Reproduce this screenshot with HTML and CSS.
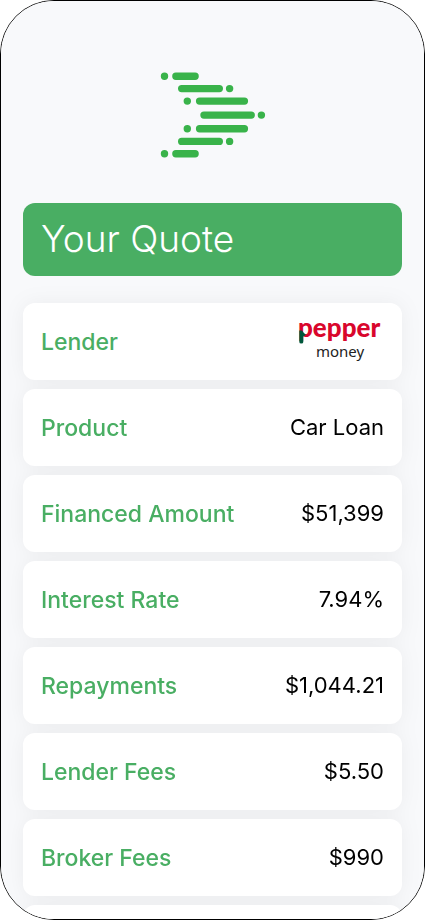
FILE: index.html
```html
<!DOCTYPE html>
<html lang="en">
<head>
<meta charset="utf-8">
<meta name="viewport" content="width=device-width, initial-scale=1">
<title>Your Quote</title>
<link rel="stylesheet" href="styles.css">
</head>
<body>
<main class="phone">
  <header class="brand">
    <svg class="brand-mark" viewBox="0 0 106 88" width="106" height="88" aria-hidden="true">
      <g stroke-width="7.4" stroke-linecap="round">
        <path d="M4.5 5.2h.01M15.9 5.2H35.1"/>
        <path d="M21.7 17.6H59.3M69.6 17.6h.01"/>
        <path d="M27.3 30.1h.01M39.6 30.1H84.4"/>
        <path d="M44 44.1H91.2M101.4 44.1h.01"/>
        <path d="M27.3 57.8h.01M39.6 57.8H84.4"/>
        <path d="M21.7 70.4H59.3M69.6 70.4h.01"/>
        <path d="M4.5 82.8h.01M15.9 82.8H35.1"/>
      </g>
    </svg>
  </header>
  <h1 class="title">Your Quote</h1>
  <dl class="quote">
    <div class="card">
      <dt>Lender</dt>
      <dd>
        <svg class="lender-logo" viewBox="0 0 86 46" width="86" height="46" role="img" aria-label="pepper money">
          <text class="pepper" x="0" y="19">pepper</text>
          <path class="leaf" d="M1.300 12.500H4Q5.500 15 8 16.800L5.300 18.500V24Q5.300 25.500 3.300 25.500Q1.300 25.500 1.300 24Z"/>
          <text class="money" x="18" y="39">money</text>
        </svg>
      </dd>
    </div>
    <div class="card"><dt>Product</dt><dd>Car Loan</dd></div>
    <div class="card"><dt>Financed Amount</dt><dd>$51,399</dd></div>
    <div class="card"><dt>Interest Rate</dt><dd>7.94%</dd></div>
    <div class="card"><dt>Repayments</dt><dd>$1,044.21</dd></div>
    <div class="card"><dt>Lender Fees</dt><dd>$5.50</dd></div>
    <div class="card"><dt>Broker Fees</dt><dd>$990</dd></div>
    <div class="card"></div>
  </dl>
</main>
</body>
</html>
```
FILE: styles.css
```css
* {
  box-sizing: border-box;
}

body {
  margin: 0;
  background: #fff;
  font-family: Inter, "Liberation Sans", sans-serif;
}

.phone {
  height: 100vh;
  padding: 70px 22px 0;
  overflow-y: auto;
  scrollbar-width: none;
  border: 1px solid #000;
  border-radius: 54px;
  background: #f8f9fb;
}

.brand {
  display: flex;
  justify-content: center;
  margin-bottom: 44px;
}

.brand-mark {
  fill: none;
  stroke: #39b34a;
}

.title {
  margin: 0 0 27px;
  padding: 14px 18px 15px;
  border-radius: 12px;
  background: #49ae63;
  color: #fff;
  font-size: 37px;
  font-weight: 300;
  line-height: 44px;
}

.quote {
  display: flex;
  flex-direction: column;
  gap: 9px;
  margin: 0;
  filter: drop-shadow(0 0 10px rgba(0, 0, 0, 0.05));
}

.card {
  display: flex;
  align-items: center;
  justify-content: space-between;
  min-height: 77px;
  padding: 0 18px;
  border-radius: 12px;
  background: #fff;
  font-size: 23px;
  line-height: 28px;
}

.card dt {
  color: #49ae63;
  font-weight: 500;
}

.card dd {
  margin: 0;
  padding-bottom: 2px;
  color: #000;
  font-size: 22px;
}

.lender-logo {
  display: block;
  overflow: visible;
}

.pepper {
  fill: #d9062c;
  font: 900 26px Lato, sans-serif;
}

.leaf {
  fill: #00573b;
}

.money {
  fill: #222;
  font: 400 15px "Noto Sans", sans-serif;
}
```
